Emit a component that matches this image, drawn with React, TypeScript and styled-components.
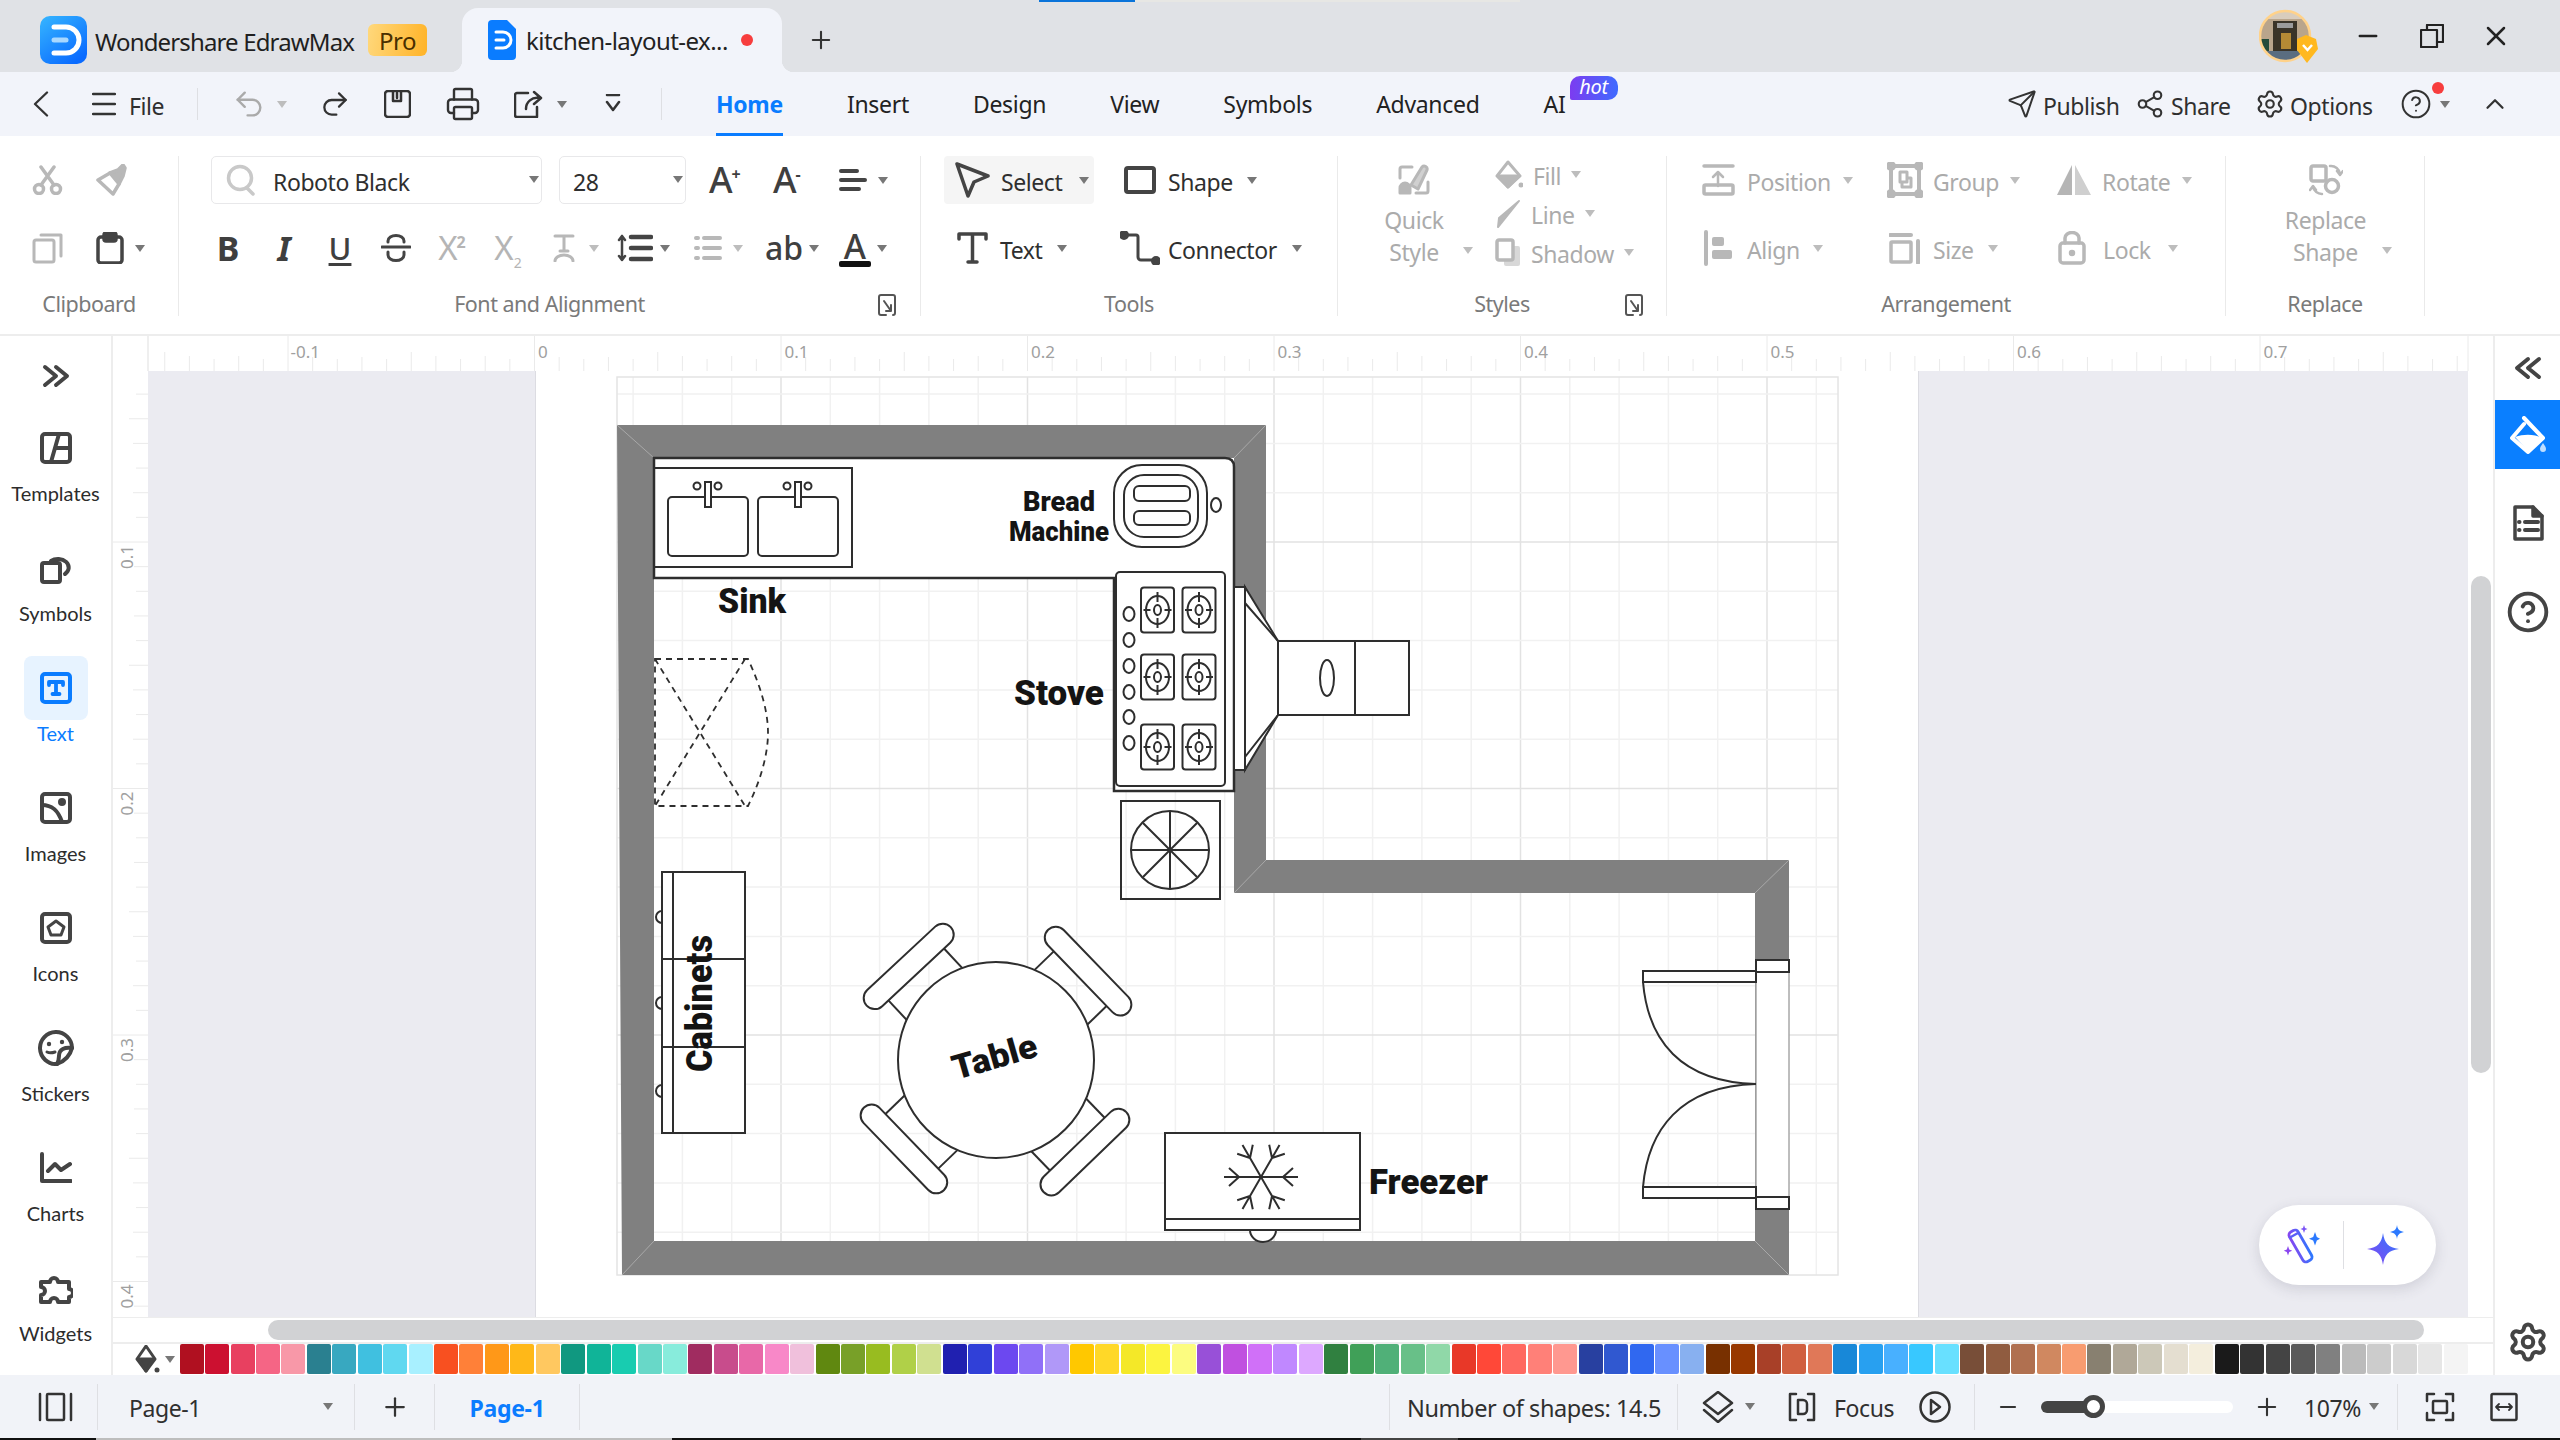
import React from 'react';
import styled, { createGlobalStyle } from 'styled-components';
import { Settings, Share2, Send, Printer, Plus, X, Minus, ChevronUp, CircleHelp, Redo2, Undo2 } from 'lucide-react';

const Global = createGlobalStyle`
  html, body { margin: 0; padding: 0; background: #fff; }
  body { font-family: "Noto Sans", sans-serif; overflow: hidden; }
  #root { width: 2560px; height: 1440px; }
  * { box-sizing: border-box; }
`;

const Screen = styled.div`
  width: 2560px; height: 1440px; display: flex; flex-direction: column; overflow: hidden; background: #fff;
`;

/* ---------- generic pieces ---------- */
const Tool = styled.div<{ $w?: number; $l?: number; $g?: number; $c?: boolean }>`
  display: flex; align-items: center; flex-shrink: 0; height: 100%;
  ${p => p.$w ? `width:${p.$w}px;` : ''}
  padding-left: ${p => p.$l || 0}px;
  gap: ${p => p.$g || 0}px;
  ${p => p.$c ? 'justify-content:center;' : ''}
`;
const Caret = styled.i<{ $ml?: number; $off?: boolean }>`
  display: block; flex-shrink: 0; width: 0; height: 0; margin-left: ${p => p.$ml || 0}px;
  border-left: 5.5px solid transparent; border-right: 5.5px solid transparent;
  border-top: 7px solid ${p => p.$off ? '#BDBDBD' : '#777'};
`;
const Label = styled.span<{ $off?: boolean; $size?: number; $ml?: number }>`
  font-size: ${p => p.$size || 23}px; letter-spacing: -0.42px; white-space: nowrap; line-height: 32px;
  position: relative; top: 1.5px; margin-left: ${p => p.$ml || 0}px;
  color: ${p => p.$off ? '#ABABAB' : '#2F2F2F'};
`;
const Rule = styled.div<{ $h?: number }>`
  width: 1px; height: ${p => p.$h || 32}px; background: #DEDFE3; flex-shrink: 0;
`;
const Svg = styled.svg<{ $c?: string }>`
  display: block; flex-shrink: 0; fill: none; stroke: ${p => p.$c || '#444'};
  stroke-linecap: round; stroke-linejoin: round;
`;

const DK = '#444';
const OFF = '#B8B8B8';

/* ---------- title bar ---------- */
const TitleBar = styled.header`
  height: 72px; flex-shrink: 0; background: #E0E2E6; display: flex; align-items: flex-end; position: relative;
`;
const Progress = styled.div`
  position: absolute; left: 1039px; top: 0; width: 481px; height: 2px; background: #E7E7E4;
  &::before { content: ''; display: block; width: 96px; height: 2px; background: #0A74DA; }
`;
const Brand = styled.div`
  width: 462px; height: 72px; padding: 8px 0 0 40px; display: flex; align-items: center;
`;
const BrandName = styled.span`
  font-size: 24px; letter-spacing: -0.85px; color: #1F1F1F; margin-left: 8px; white-space: nowrap; width: 273px; position: relative; top: 1px;
`;
const ProBadge = styled.span`
  width: 59px; height: 32px; border-radius: 6px; display: flex; align-items: center; justify-content: center;
  background: linear-gradient(100deg, #FFD87C, #FFB327); color: #4A2F00; font-size: 24px; letter-spacing: -0.5px;
`;
const DocTab = styled.div`
  width: 320px; height: 64px; background: #F2F4FA; border-radius: 16px 16px 0 0; display: flex; align-items: center;
  padding-left: 26px; position: relative;
  &::before, &::after { content: ''; position: absolute; bottom: 0; width: 12px; height: 12px; background: radial-gradient(circle at 0 0, transparent 12px, #F2F4FA 12.5px); }
  &::before { left: -12px; }
  &::after { right: -12px; background: radial-gradient(circle at 100% 0, transparent 12px, #F2F4FA 12.5px); }
`;
const DocName = styled.span`
  font-size: 24px; letter-spacing: -0.55px; color: #222; margin-left: 10px; width: 215px; white-space: nowrap;
`;
const Dot = styled.span`
  width: 12px; height: 12px; border-radius: 50%; background: #F73D3D; flex-shrink: 0;
`;
const NewTab = styled.div`
  width: 78px; height: 64px; display: flex; align-items: center; justify-content: center;
`;
const WindowControls = styled.div`
  margin-left: auto; height: 72px; display: flex; align-items: center; padding-right: 32px;
`;

const Logo = () => (
  <svg width="47" height="48" viewBox="0 0 47 48">
    <defs><linearGradient id="lg" x1="0" y1="0" x2="0.7" y2="1"><stop offset="0" stopColor="#36B6FF" /><stop offset="1" stopColor="#0A6BFF" /></linearGradient></defs>
    <rect width="47" height="48" rx="10" fill="url(#lg)" />
    <path d="M14 11H26a13 13 0 0 1 0 26H14" fill="none" stroke="#fff" strokeWidth="5" strokeLinecap="round" />
    <path d="M14 24H26" fill="none" stroke="#A9D8FF" strokeWidth="5" strokeLinecap="round" />
  </svg>
);
const TabIcon = () => (
  <svg width="28" height="40" viewBox="0 0 28 40">
    <path d="M4 0H19L28 9V36a4 4 0 0 1-4 4H4a4 4 0 0 1-4-4V4a4 4 0 0 1 4-4Z" fill="#0A7CFF" />
    <path d="M8 12H15a8 8 0 0 1 0 16H8M8 20H16" fill="none" stroke="#fff" strokeWidth="3" strokeLinecap="round" />
  </svg>
);
const Avatar = () => (
  <svg width="62" height="54" viewBox="0 0 62 54">
    <defs><clipPath id="av"><ellipse cx="26" cy="27" rx="25" ry="25" /></clipPath></defs>
    <g clipPath="url(#av)">
      <rect width="52" height="54" fill="#B9A58C" />
      <rect x="0" y="0" width="52" height="10" fill="#D9CDBD" />
      <rect x="14" y="12" width="24" height="30" fill="#3A3428" />
      <rect x="18" y="14" width="16" height="5" fill="#9B9B9B" />
      <rect x="22" y="24" width="10" height="16" fill="#B58A35" />
      <rect x="2" y="30" width="8" height="20" fill="#234B3A" />
      <rect x="0" y="42" width="52" height="12" fill="#5A6D80" />
    </g>
    <ellipse cx="26" cy="27" rx="25" ry="25" fill="none" stroke="#FFD28A" strokeWidth="2.5" />
    <path d="M47 26L57 30 59 40 48 54 38 41 38 30Z" fill="#FFB81F" />
    <path d="M44 36l4.500 5 4.500-5" fill="none" stroke="#fff" strokeWidth="2.500" />
  </svg>
);

/* ---------- menu bar ---------- */
const MenuBar = styled.nav`
  height: 64px; flex-shrink: 0; background: #F2F4FA; display: flex; align-items: center;
`;
const Tabs = styled.div`
  display: flex; gap: 64px; height: 64px; margin-left: 54px; align-items: center;
`;
const TabItem = styled.div<{ $on?: boolean }>`
  position: relative; height: 64px; display: flex; align-items: center; white-space: nowrap;
  font-size: 23px; letter-spacing: -0.3px; color: ${p => p.$on ? '#0A7CFF' : '#222'}; font-weight: ${p => p.$on ? 700 : 400};
  &::after { content: ''; position: absolute; left: 0; right: 0; bottom: 0; height: 3px; background: ${p => p.$on ? '#0A7CFF' : 'transparent'}; }
`;
const Hot = styled.span`
  position: absolute; left: 26px; top: 4px; width: 48px; height: 24px; border-radius: 10px 10px 10px 2px;
  background: linear-gradient(90deg, #7C3CF0, #3F6BFF); color: #fff; font-size: 20px; font-style: italic; line-height: 22px; text-align: center;
`;
const MenuRight = styled.div`
  margin-left: auto; display: flex; height: 64px; align-items: center; padding-right: 50px;
`;
const RedDot = styled.span`
  position: absolute; left: 32px; top: 10px; width: 12px; height: 12px; border-radius: 50%; background: #F73D3D;
`;
const HelpTool = styled(Tool)`
  position: relative;
`;

/* ---------- ribbon ---------- */
const Ribbon = styled.section`
  height: 200px; flex-shrink: 0; background: #fff; border-bottom: 2px solid #EDEDED; display: flex; padding-top: 20px;
`;
const Group = styled.div<{ $w: number }>`
  width: ${p => p.$w}px; height: 160px; flex-shrink: 0; border-right: 1px solid #EAEAEA; display: flex; flex-direction: column;
`;
const GroupBody = styled.div<{ $row?: boolean }>`
  height: 116px; display: flex; flex-direction: ${p => p.$row ? 'row' : 'column'}; gap: ${p => p.$row ? 0 : 20}px;
`;
const Row = styled.div<{ $l?: number }>`
  height: 48px; display: flex; align-items: center; padding-left: ${p => p.$l || 0}px;
`;
const GroupLabel = styled.div`
  height: 24px; margin-top: 20px; line-height: 24px; text-align: center; font-size: 21.500px; color: #7A7A7A; letter-spacing: -0.5px; position: relative;
`;
const Launcher = styled.span<{ $r: number }>`
  position: absolute; right: ${p => p.$r}px; top: 2px; display: block;
`;
const Select = styled.div<{ $w: number; $ml?: number }>`
  width: ${p => p.$w}px; height: 48px; border: 1.500px solid #E8E8EA; border-radius: 5px; display: flex; align-items: center; flex-shrink: 0;
  margin-left: ${p => p.$ml || 0}px; position: relative;
`;
const SelectCaret = styled(Caret)`
  position: absolute; right: 2px; top: 19px;
`;
const Glyph = styled.span<{ $size?: number; $w?: number; $i?: boolean; $off?: boolean; $u?: boolean }>`
  font-size: ${p => p.$size || 30}px; font-weight: ${p => p.$w || 500}; font-style: ${p => p.$i ? 'italic' : 'normal'}; line-height: 34px;
  color: ${p => p.$off ? '#B5B5B5' : '#3F3F3F'}; ${p => p.$u ? 'text-decoration: underline; text-underline-offset: 3px; text-decoration-thickness: 3px;' : ''}
  white-space: nowrap;
`;
const Sup = styled.sup`
  font-size: 16px; line-height: 0; font-weight: 700; margin-left: -1px;
`;
const Sub = styled.sub`
  font-size: 14px; line-height: 0;
`;
const ColorA = styled.span`
  display: flex; flex-direction: column; align-items: center; width: 32px;
`;
const ColorBar = styled.i`
  display: block; width: 32px; height: 6px; border-radius: 2px; background: #111; margin-top: -2px;
`;
const SelectBtn = styled.div`
  width: 150px; height: 48px; background: #F5F5F5; border-radius: 4px; display: flex; align-items: center; padding-left: 11px; gap: 10px; flex-shrink: 0;
`;
const StackCol = styled.div<{ $w: number }>`
  width: ${p => p.$w}px; display: flex; flex-direction: column; align-items: center; padding-top: 6px; flex-shrink: 0;
`;
const StackText = styled.div`
  height: 32px; position: relative; display: flex; align-items: center;
`;
const StackIcon = styled.div`
  height: 40px; display: flex; justify-content: center; padding-top: 2px;
`;
const StackCaret = styled(Caret)`
  position: absolute; left: calc(100% + 24px); top: 13px;
`;
const MiniCol = styled.div`
  display: flex; flex-direction: column; margin-top: -1px; padding-left: 5px;
`;
const MiniRow = styled.div`
  height: 40px; display: flex; align-items: center; gap: 10px;
`;

/* ---------- workspace ---------- */
const Workspace = styled.main`
  flex: 1; min-height: 0; display: flex; background: #fff;
`;
const SideBar = styled.aside`
  width: 113px; flex-shrink: 0; border-right: 2px solid #EDEDED; display: flex; flex-direction: column; align-items: center;
`;
const SideCollapse = styled.div`
  height: 72px; display: flex; align-items: center; justify-content: center; padding-top: 8px;
`;
const SideItem = styled.div`
  height: 120px; width: 112px; display: flex; flex-direction: column; align-items: center; padding-top: 8px;
`;
const SideIcon = styled.div<{ $on?: boolean }>`
  width: 64px; height: 64px; border-radius: 8px; background: ${p => p.$on ? '#E7F3FF' : 'transparent'}; display: flex; align-items: center; justify-content: center;
`;
const SideLabel = styled.div<{ $on?: boolean }>`
  font-family: Lato, sans-serif; font-size: 20px; line-height: 24px; margin-top: 1px; color: ${p => p.$on ? '#0A7CFF' : '#2C2C2C'};
`;
const Center = styled.div`
  width: 2380px; flex-shrink: 0; display: flex; flex-direction: column;
`;
const TopRuler = styled.div`
  height: 35px; flex-shrink: 0; background: #fff;
`;
const Middle = styled.div`
  flex: 1; min-height: 0; display: flex;
`;
const SideRuler = styled.div`
  width: 35px; flex-shrink: 0; background: #fff;
`;
const Canvas = styled.div`
  width: 2320px; flex-shrink: 0; background: #EBEBF1; padding-left: 388px; position: relative; overflow: hidden;
`;
const Page = styled.div`
  width: 1382px; height: 100%; background: #fff; box-shadow: 0 0 0 1px #DCDCE2;
`;
const VScroll = styled.div`
  width: 25px; flex-shrink: 0; padding: 205px 2px 0 3px; background: #fff;
`;
const VThumb = styled.div`
  width: 20px; height: 497px; border-radius: 10px; background: #D1D2D4;
`;
const HScroll = styled.div`
  height: 25px; flex-shrink: 0; border-top: 1px solid #EDEDED; padding: 2px 0 0 155px; background: #fff;
`;
const HThumb = styled.div`
  width: 2156px; height: 20px; border-radius: 10px; background: #D1D2D4;
`;
const Palette = styled.div`
  height: 33px; flex-shrink: 0; border-top: 2px solid #EDEDED; display: flex; align-items: flex-start;
`;
const PaletteTool = styled.div`
  width: 70px; height: 31px; display: flex; align-items: center; padding-left: 22px; gap: 4px;
`;
const Swatches = styled.div`
  display: flex; gap: 1.450px;
`;
const Swatch = styled.i<{ $c: string }>`
  display: block; width: 24px; height: 30px; border-radius: 2px; background: ${p => p.$c};
`;
const RightPanel = styled.aside`
  width: 67px; flex-shrink: 0; border-left: 2px solid #EDEDED; display: flex; flex-direction: column;
`;
const PanelCell = styled.div<{ $h: number; $on?: boolean; $end?: boolean }>`
  height: ${p => p.$h}px; display: flex; align-items: center; justify-content: center; background: ${p => p.$on ? '#0A7FFF' : 'transparent'};
  ${p => p.$end ? 'margin-top:auto;' : ''}
`;
const AiPill = styled.div`
  position: absolute; left: 2111px; bottom: 32px; width: 177px; height: 80px; border-radius: 40px; background: #fff;
  box-shadow: 0 4px 14px rgba(60,60,90,.16); display: flex; align-items: center;
`;
const AiSlot = styled.div<{ $r?: number }>`
  flex: 1; display: flex; justify-content: center; align-items: center; padding-right: ${p => p.$r || 0}px;
`;

/* ---------- status bar ---------- */
const StatusBar = styled.footer`
  height: 63px; flex-shrink: 0; background: #F1F3F8; display: flex; align-items: center;
`;
const StatusGroup = styled.div`
  display: flex; height: 48px; align-items: center;
`;
const StatusRight = styled(StatusGroup)`
  margin-left: auto; padding-right: 42px;
`;
const CurrentPage = styled.span`
  font-size: 23px; font-weight: 700; color: #0A7CFF; letter-spacing: -0.3px; position: relative; top: 1.5px;
`;
const Track = styled.div`
  width: 192px; height: 12px; border-radius: 6px; background: #fff; margin: 0 20px 0 21px; display: flex; align-items: center;
`;
const TrackFill = styled.div`
  width: 53px; height: 12px; border-radius: 6px 0 0 6px; background: #444; position: relative;
`;
const Knob = styled.i`
  position: absolute; right: -11px; top: -5.500px; display: block; width: 23px; height: 23px; border-radius: 50%; background: #fff; border: 5px solid #444;
`;
const TaskStrip = styled.div`
  height: 2px; flex-shrink: 0; background: #111; display: flex;
`;
const StripSeg = styled.i<{ $w: number; $ml: number; $c: string }>`
  display: block; width: ${p => p.$w}px; margin-left: ${p => p.$ml}px; background: ${p => p.$c};
`;

/* ---------- ribbon icons ---------- */
const S = ({ w = 32, h = 32, vb, c = DK, sw = 3, children }: any) => (
  <Svg $c={c} width={w} height={h} viewBox={vb || `0 0 ${w} ${h}`} strokeWidth={sw}>{children}</Svg>
);
const Cut = () => <S w={32} h={30} c={OFF} sw={3.500}><circle cx="7" cy="24" r="4.500" /><circle cx="24" cy="24" r="4.500" /><path d="M9 20 22 2M22 20 9 2" /></S>;
const Brush = () => <S w={34} h={32} c={OFF} sw={3.500}><path d="M4 16 16 9 25 20 19 30Z" /><path d="M16 9 24 6 29 1 31 4 29 12 25 20" fill={OFF} /></S>;
const CopyI = () => <S w={32} h={32} c={OFF} sw={3}><rect x="2" y="8" width="20" height="22" rx="2" /><path d="M9 3H29V24" /></S>;
const Paste = () => <S w={28} h={32} sw={3.500}><rect x="2" y="5" width="24" height="26" rx="3" /><rect x="8" y="1" width="12" height="8" rx="2" fill={DK} /></S>;
const Search = () => <S w={30} h={32} c="#C9C9C9" sw={3.500}><circle cx="14" cy="14" r="11.500" /><path d="M21 24l6 6" /></S>;
const AlignI = ({ c = DK }: any) => <S w={28} h={24} c={c} sw={4}><path d="M2 3H18M2 12H26M2 21H20" /></S>;
const Strike = () => <S w={30} h={28} sw={3}><path d="M7 8V7a8 5.500 0 0 1 16 0v1M7 18v3a8 5.500 0 0 0 16 0v-3M1 13H29" /></S>;
const TxtEff = () => <S w={22} h={28} c={OFF} sw={3}><path d="M2 2H20M11 2V17M7 17H15M2 27a9 6 0 0 1 18 0" /></S>;
const Spacing = () => <S w={36} h={28} sw={3.500}><path d="M14 3H34M14 14H34M14 25H34" strokeWidth="4.500" /><path d="M5 2V26M2 6l3-4 3 4M2 22l3 4 3-4" strokeWidth="2.500" /></S>;
const ListI = () => <S w={28} h={26} c={OFF} sw={4}><path d="M10 3H26M10 13H26M10 23H26M2 3H4M2 13H4M2 23H4" /></S>;
const Launch = () => <S w={18} h={22} c="#555" sw={2}><path d="M8 21H3a2 2 0 0 1-2-2V3a2 2 0 0 1 2-2H15a2 2 0 0 1 2 2V19a2 2 0 0 1-2 2M6 7l7 10M13 11v6H8" /></S>;
const Cursor = ({ c = DK }: any) => <S w={36} h={36} c={c} sw={3.500}><path d="M2 2 33 14 19 20 13 34Z" /></S>;
const ShapeI = () => <S w={32} h={28} sw={4}><rect x="2" y="2" width="28" height="24" rx="2" /></S>;
const TTool = () => <S w={31} h={32} sw={3.500}><path d="M2 7V2H29V7M15.500 2V29M11 30H20" /></S>;
const Connector = () => <S w={40} h={34} sw={3}><circle cx="4" cy="4" r="3.500" fill={DK} /><circle cx="36" cy="30" r="3.500" fill={DK} /><path d="M8 4H16a2 2 0 0 1 2 2V26a3 3 0 0 0 3 3H32" /></S>;
const Quick = () => <S w={32} h={32} c={OFF} sw={3}><path d="M14 3H4a2 2 0 0 0-2 2V14M18 29H28a2 2 0 0 0 2-2V18" /><path d="M2 29V24a5 5 0 0 1 10 0v5Z" fill={OFF} /><path d="M13 21 24 3a3 3 0 0 1 5 3L20 25Z" fill="#D0D0D0" /></S>;
const FillI = ({ c = OFF }: any) => <S w={28} h={30} c={c} sw={3}><path d="M13 2 25 16 13 27 2 16Z" /><path d="M3 16H24L13 27Z" fill={c} /><circle cx="26" cy="25" r="2.500" fill={c} stroke="none" /></S>;
const LineI = () => <S w={26} h={30} c={OFF} sw={2}><path d="M24 2 8 22 3 28 4 19Z" fill={OFF} /></S>;
const ShadowI = () => <S w={26} h={30} c={OFF} sw={3.500}><rect x="9" y="8" width="16" height="20" rx="2" fill="#D8D8D8" stroke="none" /><rect x="2" y="2" width="16" height="20" rx="2" fill="#fff" /></S>;
const PosI = () => <S w={33} h={32} c={OFF} sw={3.500}><path d="M2 2H31" /><path d="M16 22V8M11 13l5-5 5 5" strokeWidth="2.500" /><rect x="2" y="21" width="29" height="9" rx="1.500" /></S>;
const GroupI = () => <S w={36} h={36} c={OFF} sw={4}><rect x="4" y="4" width="28" height="28" rx="2" /><rect x="1" y="1" width="6" height="6" rx="3" fill={OFF} /><rect x="29" y="1" width="6" height="6" rx="3" fill={OFF} /><rect x="1" y="29" width="6" height="6" rx="3" fill={OFF} /><rect x="29" y="29" width="6" height="6" rx="3" fill={OFF} /><path d="M13 10H20V20H13ZM20 16H24V25H15V20" strokeWidth="3" /></S>;
const RotI = () => <S w={36} h={32} c="none" sw={0}><path d="M16 1V31H1Z" fill="#B5B5B5" /><path d="M19 1V31H35Z" fill="#CFCFCF" /></S>;
const AlignL = () => <S w={28} h={36} c={OFF} sw={4}><path d="M2 2V34" /><rect x="8" y="7" width="12" height="9" rx="2" fill={OFF} stroke="none" /><rect x="8" y="20" width="20" height="9" rx="2" fill={OFF} stroke="none" /></S>;
const SizeI = () => <S w={32} h={32} c={OFF} sw={3.500}><rect x="2" y="10" width="20" height="20" rx="1" /><path d="M1 3H22" strokeWidth="4" /><path d="M29 9V31" strokeWidth="4" /></S>;
const LockI = () => <S w={28} h={34} c={OFF} sw={3.500}><rect x="2" y="12" width="24" height="20" rx="3" /><path d="M7 12V7a7 5.500 0 0 1 14 0v5" /><circle cx="14" cy="22" r="1.500" fill={OFF} /></S>;
const ReplaceI = () => <S w={34} h={32} c={OFF} sw={3.500}><rect x="2" y="2" width="15" height="15" rx="2" /><circle cx="23" cy="22" r="6.500" /><path d="M21 2a9 9 0 0 1 10 8M28 7l3 4 3-4M13 30a9 9 0 0 1-9-7M1 26l3-4 3 4" strokeWidth="2.500" /></S>;

/* menu icons */
const Back = () => <S w={16} h={26} sw={2.300} c="#333"><path d="M14 1.500 2 13 14 24.500" /></S>;
const Burger = () => <S w={24} h={24} sw={2.500} c="#333"><path d="M1 2H23M1 12H23M1 22H23" /></S>;
const SaveI = () => <S w={27} h={28} sw={2.500} c="#333"><rect x="1" y="1" width="25" height="26" rx="3" /><path d="M9 1V11H17V1M13 3V8" /></S>;
const ExportI = () => <S w={30} h={28} sw={2.500} c="#333"><path d="M14 3H3a2 2 0 0 0-2 2V25a2 2 0 0 0 2 2H23V17M12 19a11 11 0 0 1 13-11M20 2l7 6-7 6" /></S>;
const MoreI = () => <S w={16} h={20} sw={2.500} c="#333"><path d="M2 1H14M2 8l6 8 6-8" /></S>;

/* side icons */
const SideT = () => <S w={32} h={32} sw={4}><rect x="2" y="2" width="28" height="28" rx="3" /><path d="M19 2 11 30M15 16H30" /></S>;
const SideSym = () => <S w={32} h={32} sw={4}><path d="M13 11H4a2 2 0 0 0-2 2V28a2 2 0 0 0 2 2H18a2 2 0 0 0 2-2V13a2 2 0 0 0-2-2H13Z" /><path d="M11 9a10 8 0 1 1 14 13" /></S>;
const SideText = () => <S w={32} h={32} sw={4} c="#0A7CFF"><rect x="2" y="2" width="28" height="28" rx="3" /><path d="M9 13V10H23V13M16 10V22M12.500 22H19.500" strokeWidth="3.800" /></S>;
const SideImg = () => <S w={32} h={32} sw={4}><rect x="2" y="2" width="28" height="28" rx="3" /><path d="M2 13c10 0 16 5 20 17" /><circle cx="22" cy="10" r="2" fill={DK} /></S>;
const SideIcons = () => <S w={32} h={32} sw={4}><rect x="2" y="2" width="28" height="28" rx="3" /><path d="M16 9 24 15 21 23H11L8 15Z" strokeWidth="3" /></S>;
const SideSticker = () => <S w={36} h={36} sw={4}><path d="M34 18a16 16 0 1 0-15 16c8-3 13-8 15-16Z" /><path d="M34 18c-7-1-13 1-13 8 0 3-1 6-2 8" /><circle cx="11" cy="14" r="2.200" fill={DK} stroke="none" /><circle cx="24" cy="12" r="2.200" fill={DK} stroke="none" /><path d="M9 22c2 1 5 1 8 0" strokeWidth="3" /></S>;
const SideChart = () => <S w={32} h={32} sw={4}><path d="M2 2V29H31M8 19l7-7 6 6 9-6" /></S>;
const SideWidget = () => <S w={34} h={32} sw={4}><path d="M2 10H11a4 4 0 1 1 8 0H30V17a4 4 0 0 1 0 8V30H19a4 4 0 0 0-8 0H2V23a4 4 0 0 0 0-8Z" /></S>;

const Bucket = ({ c = '#fff' }: any) => (
  <svg width="36" height="38" viewBox="0 0 36 38">
    <path d="M14 2 33 22 18 36 2 22 14 8" fill="none" stroke={c} strokeWidth="4" strokeLinejoin="round" strokeLinecap="round" />
    <path d="M5 21 C14 18 24 18 32 22 L18 35Z" fill={c} />
    <path d="M33 27c2 3 3 4 3 6a3 3 0 0 1-6 0c0-2 1-3 3-6Z" fill="#BFDEFF" />
  </svg>
);
const DocList = () => <S w={32} h={36} sw={3.500}><path d="M3 2H21L30 11V34H3Z" /><path d="M21 2V11H30" fill={DK} /><path d="M13 17H26M13 25H26" strokeWidth="4" /><path d="M7 17H7.500M7 25H7.500" strokeWidth="4" /></S>;

const Wand = () => (
  <svg width="38" height="40" viewBox="0 0 38 40">
    <defs><linearGradient id="wg" x1="0" y1="0" x2="1" y2="1"><stop offset="0" stopColor="#8A45F0" /><stop offset="1" stopColor="#2B79FF" /></linearGradient></defs>
    <rect x="-5" y="-17" width="10" height="34" rx="3.500" transform="translate(18.500 21) rotate(-30)" fill="none" stroke="url(#wg)" strokeWidth="2.800" />
    <path d="M7 13l9-5" stroke="url(#wg)" strokeWidth="2.500" />
    <path d="M33 7l1.800 5 3.200 1.800-3.200 1.800-1.800 5-1.800-5-4.200-1.800 4.200-1.800Z" fill="#2B79FF" />
    <path d="M22 0l1 3 2.500 1-2.500 1-1 3-1-3-2.500-1 2.500-1Z" fill="#7A52F5" />
    <path d="M6 21l1.200 3.500 3 1.200-3 1.200-1.200 3.500-1.200-3.500-3-1.200 3-1.200Z" fill="#8A45F0" />
  </svg>
);
const Sparkle = () => (
  <svg width="38" height="40" viewBox="0 0 38 40">
    <defs><linearGradient id="sg" x1="0" y1="1" x2="1" y2="0"><stop offset="0" stopColor="#8A45F0" /><stop offset="1" stopColor="#2B79FF" /></linearGradient></defs>
    <path d="M16 8c1.500 10 5 14.500 16 16-11 1.500-14.500 6-16 16-1.500-10-5-14.500-16-16 11-1.500 14.500-6 16-16Z" fill="url(#sg)" />
    <path d="M30 0c.6 4 2 6 7 7-5 1-6.400 3-7 7-.6-4-2-6-7-7 5-1 6.400-3 7-7Z" fill="#2B79FF" />
  </svg>
);

/* status icons */
const PanelI = () => <S w={35} h={30} sw={2.500} c="#333"><path d="M2 2V28M33 2V28" /><rect x="9" y="2" width="17" height="26" rx="1" /></S>;
const Layers = () => <S w={34} h={32} sw={2.500} c="#333"><path d="M17 1 31 12 17 23 3 12Z" /><path d="M3 19l14 12 14-12" /></S>;
const FocusI = () => <S w={28} h={30} sw={2.500} c="#333"><path d="M8 2H2V28H8M20 2H26V28H20" /><path d="M10 8H15a4 4 0 0 1 4 4V18a4 4 0 0 1-4 4H10Z" /></S>;
const PlayI = () => <S w={32} h={32} sw={2.500} c="#333"><circle cx="16" cy="16" r="14.500" /><path d="M12 9 21 16 12 23Z" /></S>;
const FitI = () => <S w={30} h={30} sw={2.500} c="#333"><path d="M9 2H2V9M21 2H28V9M9 28H2V21M21 28H28V21" /><rect x="8" y="9" width="14" height="12" rx="1" /></S>;
const WidthI = () => <S w={28} h={30} sw={2.500} c="#333"><rect x="1.500" y="2" width="25" height="26" rx="1.500" /><path d="M6 15H22M9 12l-3 3 3 3M19 12l3 3-3 3" strokeWidth="1.800" /></S>;
const PagePaint = () => <S w={26} h={30} sw={3}><path d="M11 1 2 14 11 26 20 14Z" /><path d="M4 14H18L11 26Z" fill={DK} /><circle cx="22" cy="25" r="2.500" fill={DK} stroke="none" /></S>;
const Chevrons = ({ flip }: any) => <S w={28} h={24} sw={4}><g transform={flip ? 'translate(28 0) scale(-1 1)' : undefined}><path d="M3 3 14 12 3 21M14 3 25 12 14 21" /></g></S>;
const Snowflake = ({ x, y }: any) => (
  <g transform={`translate(${x} ${y})`}>
    {[0, 60, 120, 180, 240, 300].map(a => (
      <g key={a} transform={`rotate(${a})`}><path d="M0 0H37M22 0l10-9M22 0l10 9" /></g>
    ))}
  </g>
);

/* ---------- rulers ---------- */
const RULER = '#EAEAEA';
const TICKS = [0, 14, 12, 14, 12, 19, 15, 12, 15, 12];
const HRuler = () => {
  const lines: any[] = [];
  for (let i = -16; i < 80; i++) {
    const x = 534.5 + 24.65 * i;
    if (x < 148 || x > 2468) continue;
    const k = ((i % 10) + 10) % 10;
    const h = k === 0 ? 35 : TICKS[k];
    lines.push(<line key={i} x1={x} x2={x} y1={371 - h} y2={371} />);
  }
  return (
    <svg width="2380" height="35" viewBox="113 336 2380 35" style={{ display: 'block' }}>
      <line x1="148" x2="148" y1="336" y2="371" stroke={RULER} strokeWidth="1.500" />
      <g stroke={RULER} strokeWidth="1">{lines}</g>
      <g fontFamily="Noto Sans, sans-serif" fontSize="17" fill="#A0A0A0">
        {['-0.1', '0', '0.1', '0.2', '0.3', '0.4', '0.5', '0.6', '0.7'].map((t, i) => (
          <text key={t} x={287.500 + 246.500 * i + 3 + (i === 0 ? 0 : 1)} y="358">{t}</text>
        ))}
      </g>
      <line x1="2468" x2="2468" y1="336" y2="371" stroke={RULER} />
    </svg>
  );
};
const VRuler = () => {
  const lines: any[] = [];
  for (let i = -2; i < 42; i++) {
    const y = 295.5 + 24.65 * i;
    if (y < 371 || y > 1317) continue;
    const k = ((i % 10) + 10) % 10;
    const w = k === 0 ? 35 : TICKS[k];
    lines.push(<line key={i} x1={148 - w} x2={148} y1={y} y2={y} />);
  }
  return (
    <svg width="35" height="946" viewBox="113 371 35 946" style={{ display: 'block' }}>
      <g stroke={RULER} strokeWidth="1">{lines}</g>
      <g fontFamily="Noto Sans, sans-serif" fontSize="17" fill="#A0A0A0" textAnchor="middle">
        {['0.1', '0.2', '0.3', '0.4'].map((t, i) => (
          <text key={t} transform={`translate(133 ${557 + 246.500 * i}) rotate(-90)`}>{t}</text>
        ))}
      </g>
    </svg>
  );
};

/* ---------- floor plan ---------- */
const gridV: number[] = []; for (let i = 2; i < 28; i++) gridV.push(534.5 + 49.3 * i);
const gridH: number[] = []; for (let i = 2; i < 20; i++) gridH.push(295.5 + 49.3 * i);
const Chair = ({ a }: any) => (
  <g transform={`rotate(${a} 996 1060)`}>
    <line x1="958" x2="958" y1="943" y2="975" />
    <line x1="1034" x2="1034" y1="943" y2="975" />
    <rect x="938.500" y="921" width="115" height="22" rx="11" fill="#fff" />
  </g>
);
const Burner = ({ x, y }: any) => (
  <g>
    <rect x={x - 16.5} y={y - 22.5} width="33" height="45" rx="3" fill="#fff" />
    <ellipse cx={x} cy={y} rx="11.500" ry="14" />
    <ellipse cx={x} cy={y} rx="3.500" ry="5" />
    <path d={`M${x} ${y - 18}V${y - 8}M${x} ${y + 8}V${y + 18}M${x - 14} ${y}H${x - 7}M${x + 7} ${y}H${x + 14}`} />
  </g>
);
const PlanText = styled.text`
  font-family: Roboto, "Liberation Sans", sans-serif; font-weight: 900; fill: #141414; stroke: none;
`;
const FloorPlan = () => (
  <svg width="1382" height="946" viewBox="536 371 1382 946" style={{ display: 'block' }}>
    <defs><clipPath id="gridclip"><rect x="617" y="377" width="1221" height="898" /></clipPath></defs>
    <g clipPath="url(#gridclip)" strokeWidth="1.500">
      {gridV.map((x, i) => <line key={i} x1={x} x2={x} y1="377" y2="1275" stroke={(i + 2) % 5 === 0 ? '#E2E2E2' : '#F1F1F1'} />)}
      {gridH.map((y, i) => <line key={i} x1="617" x2="1838" y1={y} y2={y} stroke={(i + 2) % 5 === 0 ? '#E2E2E2' : '#F1F1F1'} />)}
    </g>
    <rect x="617" y="377" width="1221" height="898" fill="none" stroke="#E4E4E4" strokeWidth="1.500" />

    <path d="M617 425H1266V860H1789V1275H622ZM654 458V1241H1755V893H1234V458Z" fill="#808080" fillRule="evenodd" />
    <path d="M617 425 654 458M1266 425 1234 458M1266 860 1234 893M1789 860 1755 893M1789 1275 1755 1241M622 1275 654 1241" stroke="#A8A8A8" strokeWidth="1" />
    <g fill="none" stroke="#2E2E2E" strokeWidth="2">
      {/* door */}
      <rect x="1756" y="972" width="33" height="225" fill="#fff" stroke="#A8A8A8" strokeWidth="1.500" />
      <rect x="1756" y="960" width="33" height="12" fill="#fff" />
      <rect x="1756" y="1197" width="33" height="12" fill="#fff" />
      <rect x="1643" y="971" width="113" height="11" fill="#fff" />
      <rect x="1643" y="1187" width="113" height="11" fill="#fff" />
      <path d="M1643 982C1648 1040 1680 1082 1756 1084M1643 1187C1648 1130 1680 1086 1756 1084" />

      {/* counter */}
      <path d="M654 458H1225Q1234 458 1234 467V791H1114V578H654Z" fill="#fff" strokeWidth="2.500" />
      {/* sink */}
      <rect x="654" y="468" width="198" height="99" />
      <rect x="668" y="497" width="80" height="59" rx="4" />
      <rect x="758" y="497" width="80" height="59" rx="4" />
      <rect x="705" y="482" width="6" height="25" fill="#fff" /><circle cx="697" cy="486" r="3.500" /><circle cx="718" cy="486" r="3.500" />
      <rect x="795" y="482" width="6" height="25" fill="#fff" /><circle cx="787" cy="486" r="3.500" /><circle cx="808" cy="486" r="3.500" />
      {/* bread machine */}
      <rect x="1114" y="465" width="93" height="82" rx="28" fill="#fff" />
      <rect x="1124" y="475" width="74" height="62" rx="20" />
      <rect x="1134" y="486" width="56" height="15" rx="5" />
      <rect x="1134" y="511" width="56" height="14" rx="5" />
      <ellipse cx="1216" cy="505" rx="5" ry="7" />
      {/* stove */}
      <rect x="1116" y="572" width="109" height="214" rx="4" fill="#fff" />
      {[614, 640, 666, 692, 717, 743].map(y => <ellipse key={y} cx="1129" cy={y} rx="5.500" ry="7" />)}
      {[610, 677, 747].map(y => [1157.500, 1199].map(x => <Burner key={`${x}${y}`} x={x} y={y} />))}
      {/* hood */}
      <rect x="1234" y="587" width="11" height="183" fill="#fff" />
      <path d="M1245 587 1278 641V715L1245 770Z" fill="#fff" />
      <path d="M1245 603 1278 641M1245 757 1278 715" />
      <rect x="1278" y="641" width="131" height="74" fill="#fff" />
      <path d="M1355 641V715" />
      <ellipse cx="1327" cy="678" rx="7" ry="18" />
      {/* cooktop */}
      <rect x="1121" y="801" width="99" height="98" />
      <circle cx="1170" cy="850" r="39" />
      <path d="M1170 811V889M1131 850H1209M1143 823 1197 877M1197 823 1143 877" />
      {/* dashed */}
      <g strokeDasharray="6 5" strokeWidth="1.800">
        <path d="M655 659H748C760 685 768 710 768 733C768 755 760 782 748 806H655Z" />
        <path d="M655 659 745 806M745 659 655 806" />
      </g>
      {/* cabinets */}
      <path d="M662 911a6 6 0 0 0 0 12M662 997a6 6 0 0 0 0 12M662 1085a6 6 0 0 0 0 12" />
      <rect x="662" y="872" width="83" height="261" fill="#fff" />
      <path d="M673 872V1133M662 959H745M662 1047H745" />
      {/* table */}
      <Chair a={-43} /><Chair a={46} /><Chair a={-134} /><Chair a={136} />
      <circle cx="996" cy="1060" r="98" fill="#fff" />
      {/* freezer */}
      <path d="M1250 1230a13 12 0 0 0 26 0" fill="#fff" />
      <rect x="1165" y="1133" width="195" height="97" fill="#fff" />
      <path d="M1165 1219H1360" />
      <Snowflake x={1261} y={1177} />
    </g>
    <PlanText x="718" y="612.500" fontSize="35" textLength="68" lengthAdjust="spacingAndGlyphs">Sink</PlanText>
    <PlanText x="1014" y="705" fontSize="35" textLength="90" lengthAdjust="spacingAndGlyphs">Stove</PlanText>
    <PlanText x="1023" y="511" fontSize="28" textLength="72" lengthAdjust="spacingAndGlyphs">Bread</PlanText>
    <PlanText x="1009" y="541" fontSize="28" textLength="100" lengthAdjust="spacingAndGlyphs">Machine</PlanText>
    <PlanText x="1369" y="1194" fontSize="35" textLength="119" lengthAdjust="spacingAndGlyphs">Freezer</PlanText>
    <PlanText transform="translate(712 1072) rotate(-90)" fontSize="37" textLength="137" lengthAdjust="spacingAndGlyphs">Cabinets</PlanText>
    <PlanText transform="translate(956 1080) rotate(-16)" fontSize="34" textLength="87" lengthAdjust="spacingAndGlyphs">Table</PlanText>
  </svg>
);

const COLORS = ['#B01020','#CC1030','#E84060','#F56585','#F898A8','#2A8090','#38A8C0','#40C0E0','#60D8F0','#A8F0FF','#F85020','#FF8038','#FF9818','#FFB818','#FFC860','#109880','#10B498','#18CCB0','#68D8C8','#88ECDC','#A02C60','#C84C8C','#E868A8','#F888C8','#F0C0DC','#608810','#78A028','#98BC20','#B0D048','#D0E090','#2020B0','#3040D8','#6C48F0','#9070F8','#B098F8','#FFC800','#FFD828','#F4E828','#FCF440','#FCFC80','#9850D8','#C050E0','#D070F8','#C088FF','#DDA8FF','#308040','#40A058','#50B078','#68C088','#90D8A8','#E83828','#FF4838','#FF6860','#FF8078','#FF9890','#2840A0','#3058D0','#3068F0','#6890FF','#88B0F0','#783000','#983800','#A84028','#D06040','#E07858','#1888D8','#28A0F0','#48B0FF','#38C8FF','#68E0FF','#784E38','#905C40','#B07050','#D08860','#F89C70','#888070','#B0A898','#CCC8B8','#E4DED0','#F4EEDD','#1A1A1A','#333333','#444444','#5A5A5A','#808080','#BBBBBB','#CCCCCC','#D8D8D8','#E6E6E6','#F4F4F4','#FFFFFF'];

const SIDE = [
  ['Templates', <SideT />], ['Symbols', <SideSym />], ['Text', <SideText />], ['Images', <SideImg />],
  ['Icons', <SideIcons />], ['Stickers', <SideSticker />], ['Charts', <SideChart />], ['Widgets', <SideWidget />],
] as const;
const TAB_NAMES = ['Home', 'Insert', 'Design', 'View', 'Symbols', 'Advanced'];

export default function App() {
  return (
    <Screen>
      <Global />
      <TitleBar>
        <Progress />
        <Brand><Logo /><BrandName>Wondershare EdrawMax</BrandName><ProBadge>Pro</ProBadge></Brand>
        <DocTab><TabIcon /><DocName>kitchen-layout-ex...</DocName><Dot /></DocTab>
        <NewTab><Plus size={28} strokeWidth={1.800} color="#333" /></NewTab>
        <WindowControls>
          <Tool $w={77}><Avatar /></Tool>
          <Tool $w={64} $c><Minus size={28} strokeWidth={2.200} color="#222" /></Tool>
          <Tool $w={64} $c>
            <S w={24} h={24} sw={2.200} c="#222"><rect x="1" y="6" width="16" height="17" /><path d="M7 6V1H23V18H17" /></S>
          </Tool>
          <Tool $w={64} $c><X size={32} strokeWidth={1.900} color="#222" /></Tool>
        </WindowControls>
      </TitleBar>

      <MenuBar>
        <Tool $w={92} $l={33}><Back /></Tool>
        <Tool $w={105} $g={13}><Burger /><Label>File</Label></Tool>
        <Rule />
        <Tool $w={121} $l={34} $g={11}><Undo2 size={34} strokeWidth={1.700} color="#AAA" /><Caret $off /></Tool>
        <Tool $w={65}><Redo2 size={32} strokeWidth={1.700} color="#333" /></Tool>
        <Tool $w={61}><SaveI /></Tool>
        <Tool $w={68}><Printer size={36} strokeWidth={1.600} color="#333" /></Tool>
        <Tool $w={90} $l={1} $g={13}><ExportI /><Caret /></Tool>
        <Tool $w={58} $l={2}><MoreI /></Tool>
        <Rule />
        <Tabs>
          {TAB_NAMES.map(n => <TabItem key={n} $on={n === 'Home'}>{n}</TabItem>)}
          <TabItem>AI<Hot>hot</Hot></TabItem>
        </Tabs>
        <MenuRight>
          <Tool $w={128} $g={6}><Send size={30} strokeWidth={1.600} color="#333" /><Label>Publish</Label></Tool>
          <Tool $w={120} $g={6}><Share2 size={30} strokeWidth={1.700} color="#333" /><Label>Share</Label></Tool>
          <Tool $w={145} $g={5}><Settings size={30} strokeWidth={1.700} color="#333" /><Label>Options</Label></Tool>
          <HelpTool $w={80} $g={8}><CircleHelp size={32} strokeWidth={1.500} color="#333" /><Caret /><RedDot /></HelpTool>
          <Tool $w={30} $c><ChevronUp size={30} strokeWidth={1.800} color="#333" /></Tool>
        </MenuRight>
      </MenuBar>

      <Ribbon>
        <Group $w={179}>
          <GroupBody>
            <Row $l={32}><Tool $w={62}><Cut /></Tool><Tool><Brush /></Tool></Row>
            <Row $l={32}><Tool $w={64}><CopyI /></Tool><Tool $g={11}><Paste /><Caret /></Tool></Row>
          </GroupBody>
          <GroupLabel>Clipboard</GroupLabel>
        </Group>
        <Group $w={742}>
          <GroupBody>
            <Row $l={32}>
              <Select $w={331}><Tool $l={14} $g={17}><Search /><Label $size={23}>Roboto Black</Label></Tool><SelectCaret /></Select>
              <Select $w={127} $ml={17}><Tool $l={13}><Label>28</Label></Tool><SelectCaret /></Select>
              <Tool $w={87} $l={23}><Glyph $size={36} $w={500}>A<Sup>+</Sup></Glyph></Tool>
              <Tool $w={66}><Glyph $size={36} $w={500}>A<Sup>-</Sup></Glyph></Tool>
              <Tool $g={11}><AlignI /><Caret /></Tool>
            </Row>
            <Row $l={21}>
              <Tool $w={56} $c><Glyph $w={700} $size={34}>B</Glyph></Tool>
              <Tool $w={56} $c><Glyph $w={700} $size={34} $i>I</Glyph></Tool>
              <Tool $w={56} $c><Glyph $w={500} $size={31} $u>U</Glyph></Tool>
              <Tool $w={56} $c><Strike /></Tool>
              <Tool $w={56} $c><Glyph $off $size={33} $w={400}>X<Sup>2</Sup></Glyph></Tool>
              <Tool $w={56} $c><Glyph $off $size={33} $w={400}>X<Sub>2</Sub></Glyph></Tool>
              <Tool $w={71} $l={17} $g={14}><TxtEff /><Caret $off /></Tool>
              <Tool $w={72} $l={10} $g={7}><Spacing /><Caret /></Tool>
              <Tool $w={83} $l={15} $g={11}><ListI /><Caret $off /></Tool>
              <Tool $w={76} $l={3} $g={6}><Glyph $size={32} $w={500}>ab</Glyph><Caret /></Tool>
              <Tool $l={1} $g={6}><ColorA><Glyph $size={34} $w={500}>A</Glyph><ColorBar /></ColorA><Caret /></Tool>
            </Row>
          </GroupBody>
          <GroupLabel>Font and Alignment<Launcher $r={24}><Launch /></Launcher></GroupLabel>
        </Group>
        <Group $w={417}>
          <GroupBody>
            <Row $l={23}>
              <SelectBtn><Cursor /><Label>Select</Label><Caret $ml={7} /></SelectBtn>
              <Tool $l={30} $g={12}><ShapeI /><Label>Shape</Label><Caret $ml={2} /></Tool>
            </Row>
            <Row $l={23}>
              <Tool $w={150} $l={13} $g={12}><TTool /><Label>Text</Label><Caret $ml={3} /></Tool>
              <Tool $l={26} $g={8}><Connector /><Label>Connector</Label><Caret $ml={7} /></Tool>
            </Row>
          </GroupBody>
          <GroupLabel>Tools</GroupLabel>
        </Group>
        <Group $w={329}>
          <GroupBody $row>
            <StackCol $w={152}>
              <StackIcon><Quick /></StackIcon>
              <StackText><Label $off>Quick</Label></StackText>
              <StackText><Label $off>Style</Label><StackCaret $off /></StackText>
            </StackCol>
            <MiniCol>
              <MiniRow><FillI /><Label $off>Fill</Label><Caret $off /></MiniRow>
              <MiniRow><LineI /><Label $off>Line</Label><Caret $off /></MiniRow>
              <MiniRow><ShadowI /><Label $off>Shadow</Label><Caret $off /></MiniRow>
            </MiniCol>
          </GroupBody>
          <GroupLabel>Styles<Launcher $r={23}><Launch /></Launcher></GroupLabel>
        </Group>
        <Group $w={559}>
          <GroupBody>
            <Row $l={35}>
              <Tool $w={185} $g={12}><PosI /><Label $off>Position</Label><Caret $off $ml={0} /></Tool>
              <Tool $w={169} $g={10}><GroupI /><Label $off>Group</Label><Caret $off $ml={1} /></Tool>
              <Tool $g={10}><RotI /><Label $off>Rotate</Label><Caret $off $ml={2} /></Tool>
            </Row>
            <Row $l={37}>
              <Tool $w={185} $g={15}><AlignL /><Label $off>Align</Label><Caret $off $ml={-2} /></Tool>
              <Tool $w={169} $g={12}><SizeI /><Label $off>Size</Label><Caret $off $ml={2} /></Tool>
              <Tool $g={17}><LockI /><Label $off>Lock</Label><Caret $off $ml={0} /></Tool>
            </Row>
          </GroupBody>
          <GroupLabel>Arrangement</GroupLabel>
        </Group>
        <Group $w={199}>
          <GroupBody $row>
            <StackCol $w={199}>
              <StackIcon><ReplaceI /></StackIcon>
              <StackText><Label $off>Replace</Label></StackText>
              <StackText><Label $off>Shape</Label><StackCaret $off /></StackText>
            </StackCol>
          </GroupBody>
          <GroupLabel>Replace</GroupLabel>
        </Group>
      </Ribbon>

      <Workspace>
        <SideBar>
          <SideCollapse><Chevrons /></SideCollapse>
          {SIDE.map(([name, icon]) => (
            <SideItem key={name}>
              <SideIcon $on={name === 'Text'}>{icon}</SideIcon>
              <SideLabel $on={name === 'Text'}>{name}</SideLabel>
            </SideItem>
          ))}
        </SideBar>
        <Center>
          <TopRuler><HRuler /></TopRuler>
          <Middle>
            <SideRuler><VRuler /></SideRuler>
            <Canvas>
              <Page><FloorPlan /></Page>
              <AiPill>
                <AiSlot><Wand /></AiSlot>
                <Rule $h={48} />
                <AiSlot $r={8}><Sparkle /></AiSlot>
              </AiPill>
            </Canvas>
            <VScroll><VThumb /></VScroll>
          </Middle>
          <HScroll><HThumb /></HScroll>
          <Palette>
            <PaletteTool><PagePaint /><Caret /></PaletteTool>
            <Swatches>{COLORS.map((c, i) => <Swatch key={i} $c={c} />)}</Swatches>
          </Palette>
        </Center>
        <RightPanel>
          <PanelCell $h={64}><Chevrons flip /></PanelCell>
          <PanelCell $h={69} $on><Bucket /></PanelCell>
          <PanelCell $h={108}><DocList /></PanelCell>
          <PanelCell $h={70}><CircleHelp size={44} strokeWidth={2.100} color="#444" /></PanelCell>
          <PanelCell $h={66} $end><Settings size={42} strokeWidth={2.300} color="#444" /></PanelCell>
        </RightPanel>
      </Workspace>

      <StatusBar>
        <StatusGroup>
          <Tool $w={97} $l={38}><PanelI /></Tool>
          <Rule $h={46} />
          <Tool $w={256} $l={31}><Label>Page-1</Label><Caret $ml={122} /></Tool>
          <Rule $h={46} />
          <Tool $w={79} $c><Plus size={30} strokeWidth={1.800} color="#333" /></Tool>
          <Rule $h={46} />
          <Tool $w={144} $c><CurrentPage>Page-1</CurrentPage></Tool>
          <Rule $h={46} />
        </StatusGroup>
        <StatusRight>
          <Rule $h={46} />
          <Tool $w={287} $l={17}><Label $size={23.500}>Number of shapes: 14.5</Label></Tool>
          <Rule $h={46} />
          <Tool $w={110} $l={23} $g={10}><Layers /><Caret /></Tool>
          <Tool $w={131} $g={18}><FocusI /><Label>Focus</Label></Tool>
          <Tool $w={55}><PlayI /></Tool>
          <Rule $h={46} />
          <Tool $w={422} $l={21}>
            <Minus size={24} strokeWidth={2.200} color="#333" />
            <Track><TrackFill><Knob /></TrackFill></Track>
            <Plus size={28} strokeWidth={1.800} color="#333" />
            <Label $ml={23}>107%</Label>
            <Caret $ml={8} />
          </Tool>
          <Rule $h={46} />
          <Tool $w={92} $l={27}><FitI /></Tool>
          <Tool><WidthI /></Tool>
        </StatusRight>
      </StatusBar>
      <TaskStrip>
        <StripSeg $w={576} $ml={96} $c="#BDBDBD" />
        <StripSeg $w={97} $ml={689} $c="#444" />
      </TaskStrip>
    </Screen>
  );
}
